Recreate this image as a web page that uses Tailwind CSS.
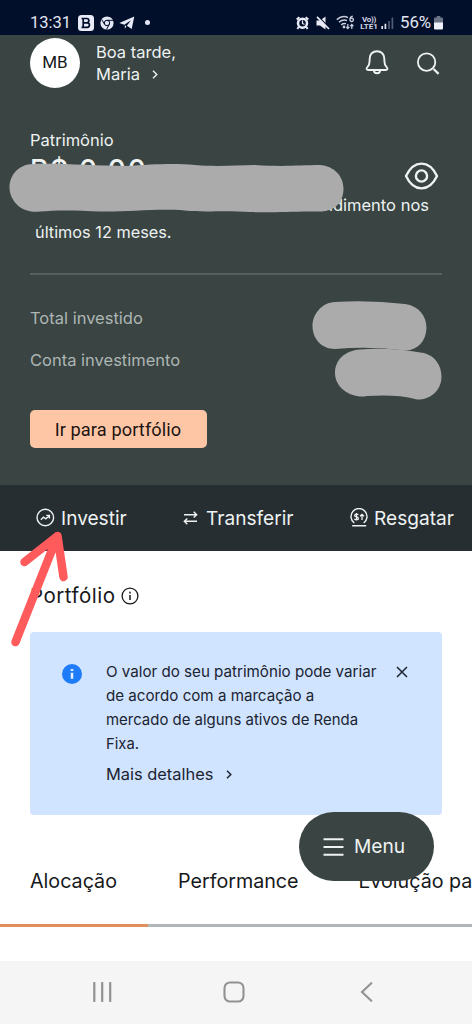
<!DOCTYPE html>
<html lang="pt-BR">
<head>
<meta charset="utf-8">
<title>Portfólio</title>
<script src="https://cdn.jsdelivr.net/npm/@tailwindcss/browser@4"></script>
</head>
<body class="bg-white">
<div class="relative flex h-[1024px] w-[472px] flex-col overflow-hidden bg-white font-['Inter',sans-serif] text-[16.5px] whitespace-nowrap text-[#16191b]">

  <!-- status bar -->
  <div class="flex h-[35px] shrink-0 items-end justify-between bg-[#020f2a] pr-[29px] pl-[30px] font-['Roboto',sans-serif] text-[#e3e6f2]">
    <div class="flex h-[25px] items-center">
      <span class="w-[48px] text-[16.5px] leading-[25px]">13:31</span>
      <svg class="h-[16px] w-[16px]" viewBox="0 0 16 16"><rect width="16" height="16" rx="3.5" fill="#e9ecf8"/><path d="M5.2 3.5h3.5a2 2 0 0 1 0 4.3H5.2zM5.2 7.8h4a2.2 2.2 0 0 1 0 4.5h-4zM3.5 3.5h2M3.5 12.3h2" fill="none" stroke="#020f2a" stroke-width="1.7"/></svg>
      <svg class="ml-[6px] h-[14px] w-[14px]" viewBox="0 0 14 14"><circle cx="7" cy="7" r="6.6" fill="#e3e6f2"/><circle cx="7" cy="7" r="2.7" fill="#e3e6f2" stroke="#020f2a" stroke-width="1"/><path d="M7 4.3H13M4.6 8.3 1.6 3.4M9.3 8.4 6.5 13.4" stroke="#020f2a"/></svg>
      <svg class="ml-[5px] h-[14px] w-[16px]" viewBox="0 0 16 14"><path d="M.3 6.900 15.300.600 12.700 13 7.900 9.700 12 4.300 5.300 8.700z" fill="#e9ecf8"/><path d="M5.800 9.200 7.400 10.300 5.900 12.800z" fill="#e9ecf8"/></svg>
      <span class="ml-[10px] h-[5px] w-[5px] rounded-full bg-[#e3e6f2]"></span>
    </div>
    <div class="flex h-[25px] items-center">
      <svg class="h-[14px] w-[13px]" viewBox="0 0 13 14"><circle cx="6.5" cy="7.2" r="4.500" fill="none" stroke="#e9ecf8" stroke-width="2.500"/><path d="M.7 3.600 3.400 1.200M12.300 3.600 9.600 1.200M2.700 11 1.300 12.900M10.300 11 11.700 12.900" stroke="#e9ecf8" stroke-width="2"/><path d="M6.500 4.500v3l2 1" fill="none" stroke="#e9ecf8" stroke-width="1.200"/></svg>
      <svg class="ml-[7px] h-[14px] w-[14px]" viewBox="0 0 14 14"><path d="M.5 4.500H4L9.500.500v13L4 9.600H.5z" fill="#e9ecf8"/><path d="M2 .5 13.800 12" stroke="#020f2a" stroke-width="1.500"/><path d="M1 .9 13 13" stroke="#e9ecf8" stroke-width="1.700"/></svg>
      <svg class="ml-[6px] h-[15px] w-[19px]" viewBox="0 0 19 15" fill="none" stroke="#c9cddd"><path d="M.8 4.600Q6.500-.2 12 2.600M3 7.300Q6.500 4.200 11 5.500M5.200 9.800Q7.500 8 10 8.800" stroke-width="1.500"/><circle cx="8" cy="12" r="1.400" fill="#c9cddd" stroke="none"/><path d="M11.800 9v4.400m-1.600-1.500 1.600 1.600 1.600-1.600M15.800 14V9.600m-1.600 1.500 1.600-1.600 1.600 1.600" stroke-width="1.300"/><path d="M16.800 1.200Q14 1.500 14 4.800M14 4.800a1.700 1.700 0 1 0 3.400 0a1.700 1.700 0 1 0-3.400 0" stroke-width="1.400"/></svg>
      <div class="ml-[5px] flex w-[18px] flex-col items-center text-[8px] leading-[7px] font-bold text-[#d5d8e6]"><span class="tracking-[-.3px]">Vo))</span><span>LTE1</span></div>
      <svg class="ml-[3px] h-[12px] w-[13px]" viewBox="0 0 13 12"><path d="M1.200 12V9M4.400 12V6.800" stroke="#e3e6f2" stroke-width="1.700"/><path d="M8 12V4M11.400 12V.5" stroke="#535c76" stroke-width="1.700"/></svg>
      <span class="ml-[6px] w-[34px] text-[16.800px] leading-[25px]">56%</span>
      <svg class="h-[14px] w-[9px]" viewBox="0 0 9 14"><path d="M2.700 0h3.600v1.500H8q1 0 1 1V7H0V2.500q0-1 1-1h1.700z" fill="#6c7389"/><path d="M0 6.500h9V12.500q0 1-1 1H1q-1 0-1-1z" fill="#eef0fa"/></svg>
    </div>
  </div>

  <!-- account summary -->
  <section class="relative flex h-[450px] shrink-0 flex-col bg-[#394443] px-[30px] text-[#eef2f1]">
    <header class="flex h-[54px] items-start pt-[2px]">
      <div class="mt-[1px] flex h-[50px] w-[50px] items-center justify-center rounded-full bg-white font-['Roboto',sans-serif] text-[17px] text-[#16191b]">MB</div>
      <div class="mt-[4px] ml-[16px] flex flex-col leading-[22px]">
        <span>Boa tarde,</span>
        <span class="flex items-center">Maria
          <svg class="ml-[12px] h-[9px] w-[6px]" viewBox="0 0 6 9"><path d="M1 .7 4.800 4.500 1 8.300" fill="none" stroke="currentColor" stroke-width="1.400"/></svg>
        </span>
      </div>
      <div class="ml-auto flex items-start">
        <svg class="mt-[12px] h-[27px] w-[24px]" viewBox="0 0 24 27" fill="none" stroke="currentColor" stroke-width="1.900" stroke-linejoin="round"><path d="M12 2.200c-4.300 0-7.300 3.100-7.300 7.300 0 4.500-.4 6.400-1.800 7.900-1.100 1.200-1.500 2-1.300 2.700.2.700.9.900 2 .9h16.800c1.100 0 1.800-.2 2-.9.2-.7-.2-1.500-1.300-2.700-1.400-1.500-1.800-3.400-1.800-7.900 0-4.200-3-7.300-7.300-7.300z"/><path d="M8.900 21.200a3.100 3.100 0 0 0 6.200 0"/></svg>
        <svg class="mt-[14px] mr-[2px] ml-[27px] h-[24px] w-[24px]" viewBox="0 0 24 24" fill="none" stroke="currentColor" stroke-width="1.800"><circle cx="10.600" cy="11.100" r="8.700"/><path d="m17.600 18 5 4.900" stroke-width="2.200"/></svg>
      </div>
    </header>
    <div class="mt-[41px] h-[20px] leading-[20px]">Patrimônio</div>
    <div class="mt-[5px] flex h-[30px] items-start justify-between">
      <span class="text-[28px] leading-[31px] font-medium tracking-[1.800px]">R$ 0,00</span>
      <svg class="mt-[7px] mr-[3px] h-[28px] w-[35px] shrink-0" viewBox="0 0 35 28" fill="none" stroke="currentColor" stroke-width="2.400" stroke-linejoin="round"><path d="M2 14C6 5.600 11.500 1.600 17.500 1.600S29 5.600 33 14C29 22.400 23.500 26.400 17.500 26.400S6 22.400 2 14z"/><circle cx="17.500" cy="14" r="5.600"/></svg>
    </div>
    <div class="mt-[6px] mr-[13px] h-[27px] text-right leading-[28px]">rendimento nos</div>
    <div class="ml-[5px] h-[27px] text-[16.300px] leading-[28px]">últimos 12 meses.</div>
    <div class="mt-[28px] h-[2px] bg-[#54605e]"></div>
    <div class="mt-[32px] flex flex-col leading-[22px] text-[#aeb6b4]">
      <span>Total investido</span>
      <span class="mt-[20px]">Conta investimento</span>
    </div>
    <button class="mt-[38.500px] h-[38px] w-[177px] rounded-[5px] bg-[#ffc6a6] pr-[1px] font-['Roboto',sans-serif] text-[18.200px] leading-[39px] tracking-[.1px] text-[#1c1512]">Ir para portfólio</button>

    <!-- brush strokes covering private amounts -->
    <svg class="absolute inset-0 h-[450px] w-[472px]" viewBox="0 35 472 450" fill="#ababab">
      <path d="M33 164C60 163 95 166 125 166 155 164 175 163 195 165 220 167 235 165 255 165 285 167 300 165 320 165 334 166 343.500 176 343.500 188.500 343.500 203 334 211.500 320 211.500 290 211 275 213 250 212 220 210 205 213 180 210 150 209 125 212 100 211.500 75 210 55 210 40 211.500 22 214 9.500 201 9.500 187.500 9.500 175 19 164 33 164z"/>
      <path d="M335 302Q370 300 405 304C419 306 426.500 316 426.500 328 426 341 418 350 406 350.500Q370 346 335 349C321 349 312.500 338 312.500 326S322 302.500 335 302z"/>
      <path d="M360 349.500Q390 347 424 353C435 356 441.500 365 441.500 377 441 392 429 400 417 399.500 400 395 385 395 367 396 353 399 335 389 335 373 335 360 345 350.500 360 349.500z"/>
    </svg>
  </section>

  <!-- quick actions -->
  <nav class="flex h-[66px] shrink-0 items-center bg-[#272e31] pl-[36px] text-[19.100px] text-[#eef2f3]">
    <div class="flex w-[147px] items-center">
      <svg class="h-[19px] w-[19px]" viewBox="0 0 19 19" fill="none" stroke="currentColor" stroke-width="1.400"><circle cx="9.300" cy="9.500" r="8.300"/><path d="m4.800 11.700 2.700-2.500 2.300 1.600 3.200-2.900M10.200 7.400h3.200v3.200"/></svg>
      <span class="ml-[6px]">Investir</span>
    </div>
    <div class="flex w-[167px] items-center">
      <svg class="h-[14px] w-[15px]" viewBox="0 0 15 14" fill="none" stroke="currentColor" stroke-width="1.400"><path d="M1 3.700h12.500M10.700.8l3 2.900-3 2.900M14 10.300H1.500M4.300 7.400l-3 2.900 3 2.900"/></svg>
      <span class="ml-[8px]">Transferir</span>
    </div>
    <div class="flex items-center">
      <svg class="h-[19px] w-[18px]" viewBox="0 0 18 19" fill="none" stroke="currentColor" stroke-width="1.400"><path d="M4.300 15A8 8 0 1 1 13.700 15M2.200 17.800h14"/><path d="M8.300 6.900C7.300 5.700 4.600 6 4.600 7.500c0 1.900 3.800.9 3.800 2.900 0 1.600-2.900 1.800-4 .4M6.500 4.900v7.700M12 12V6.300m-2 2 2-2 2 2" stroke-width="1.300"/></svg>
      <span class="ml-[6px]">Resgatar</span>
    </div>
  </nav>

  <!-- portfolio -->
  <main class="flex h-[410px] shrink-0 flex-col">
    <div class="ml-[30px] flex h-[80px] items-center pt-[10px]">
      <h1 class="w-[91px] text-[20.500px] leading-[24px] tracking-[.500px]">Portfólio</h1>
      <svg class="h-[18px] w-[18px]" viewBox="0 0 18 18" fill="none" stroke="currentColor" stroke-width="1.300"><circle cx="9" cy="9" r="7.900"/><path d="M9 7.900v5.200M9 4.700v1.700" stroke-width="1.500"/></svg>
    </div>
    <div class="mx-[30px] mt-[0.500px] flex h-[183.500px] rounded-[4px] bg-[#d0e3ff] text-[#1b2431]">
      <svg class="mt-[32px] ml-[32px] h-[20px] w-[20px] shrink-0" viewBox="0 0 20 20"><circle cx="10" cy="10" r="10" fill="#1f7cf8"/><path d="M10 8.800v6M10 5v2" stroke="#e6f1ff" stroke-width="2.500"/></svg>
      <div class="mt-[28px] ml-[24px] w-[270px] text-[15.150px] leading-[24.300px]">
        <p>O valor do seu patrimônio pode variar</p>
        <p>de acordo com a marcação a</p>
        <p class="text-[14.950px]">mercado de alguns ativos de Renda</p>
        <p class="text-[14.800px]">Fixa.</p>
        <p class="mt-[5.500px] flex items-center text-[16.400px]">Mais detalhes
          <svg class="ml-[13px] h-[9px] w-[6px]" viewBox="0 0 6 9"><path d="M1 .7 4.800 4.500 1 8.300" fill="none" stroke="currentColor" stroke-width="1.500"/></svg>
        </p>
      </div>
      <svg class="mt-[34px] ml-[20px] h-[12px] w-[12px] shrink-0" viewBox="0 0 12 12"><path d="m1 1 10 10M11 1 1 11" stroke="currentColor" stroke-width="1.500"/></svg>
    </div>
    <div class="mt-[42px] flex h-[67px] overflow-hidden pl-[30px] text-[19.700px] leading-[49px]">
      <span class="w-[148px] shrink-0">Alocação</span>
      <span class="w-[180.500px] shrink-0">Performance</span>
      <span class="shrink-0">Evolução patrimonial</span>
    </div>
    <div class="flex h-[3px] shrink-0 bg-[#b2b5b9]"><span class="w-[148px] bg-[#e18e5b]"></span></div>
  </main>

  <!-- system navigation -->
  <footer class="flex h-[63px] shrink-0 items-center bg-[#f5f5f5] pb-[2px] pl-[92px]">
    <svg class="h-[20px] w-[20px]" viewBox="0 0 20 20"><path d="M2.300 1v18M10.200 1v18M18.200 1v18" stroke="#929292" stroke-width="2.200" stroke-linecap="round"/></svg>
    <svg class="ml-[111px] h-[22px] w-[22px]" viewBox="0 0 22 22"><rect x="1.500" y="1.500" width="19" height="19" rx="5.500" fill="none" stroke="#929292" stroke-width="2.100"/></svg>
    <svg class="ml-[115px] h-[20px] w-[13px]" viewBox="0 0 13 20"><path d="M11.300 1.200 2 10l9.300 8.800" fill="none" stroke="#929292" stroke-width="2.100" stroke-linecap="round"/></svg>
  </footer>

  <!-- floating menu button -->
  <button class="absolute top-[812px] left-[299px] flex h-[69px] w-[135px] items-center rounded-full bg-[#394443] pl-[24px] text-[19.200px] text-[#eef2f1]">
    <svg class="h-[18px] w-[21px]" viewBox="0 0 21 18"><path d="M.500 1.200h20M.500 9h20M.500 16.800h20" stroke="currentColor" stroke-width="1.900"/></svg>
    <span class="ml-[10px]">Menu</span>
  </button>

  <!-- pointer to the invest action -->
  <svg class="absolute top-[525px] left-0 h-[125px] w-[80px]" viewBox="0 525 80 125" fill="none" stroke="#ff5a5c" stroke-width="8.500" stroke-linecap="round" stroke-linejoin="round"><path d="M15.500 642 57.500 536M24.500 562 57.500 536 63.500 577"/></svg>
</div>
</body>
</html>
